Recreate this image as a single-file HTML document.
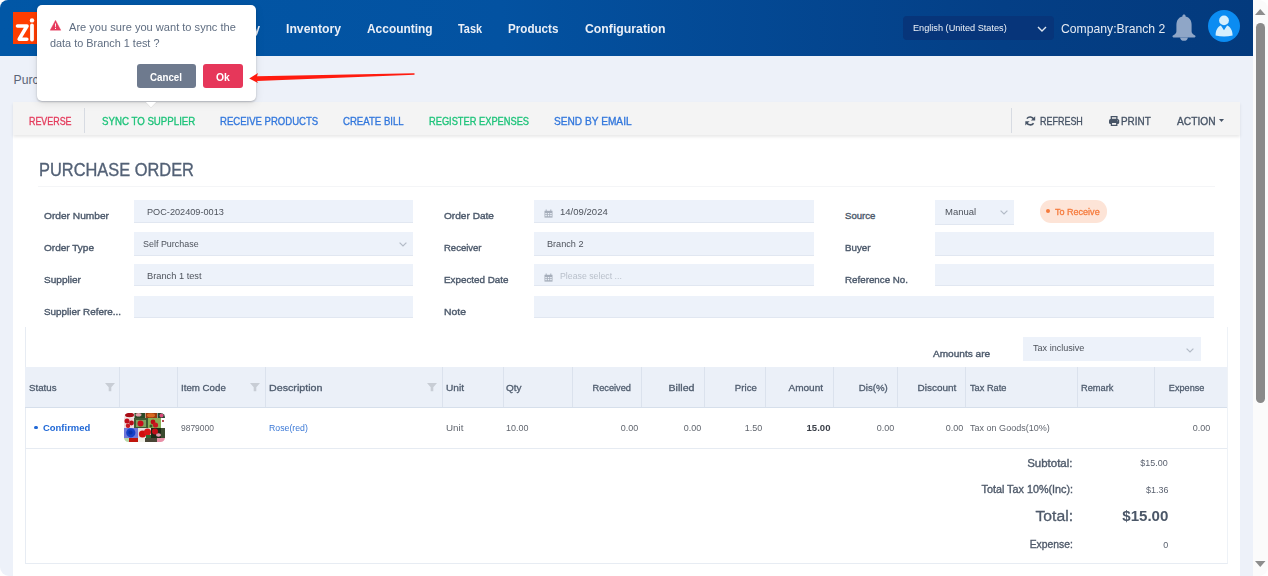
<!DOCTYPE html>
<html><head><meta charset="utf-8">
<style>
*{box-sizing:border-box;margin:0;padding:0}
html,body{width:1268px;height:576px;overflow:hidden;background:#fff;font-family:"Liberation Sans",sans-serif}
.a{position:absolute}
.t{position:absolute;white-space:nowrap;line-height:1}
svg{position:absolute;overflow:visible}
</style></head>
<body>
<div class="a" style="left:0;top:0;width:1253px;height:576px;background:#edf1f9;border-top-left-radius:8px;border-bottom-left-radius:9px"></div>
<div class="a" style="left:0;top:0;width:1253px;height:56px;background:linear-gradient(90deg,#0157a6 0%,#0352a1 40%,#043f86 80%,#033a7d 100%);border-top-left-radius:8px"></div>
<div class="a" style="left:13px;top:12px;width:87px;height:32px;background:#ff3d00"></div>
<svg style="left:13px;top:12px" width="87" height="32" viewBox="0 0 87 32"><path d="M4.5 14h9.5l-7.8 13.2h7.6" stroke="#fff" stroke-width="3.6" fill="none" stroke-linecap="round" stroke-linejoin="round"/><circle cx="19" cy="8.4" r="2.2" fill="#fff"/><path d="M19 13.5v14" stroke="#fff" stroke-width="3.8" stroke-linecap="round"/></svg>
<div class="t" style="left:221.00px;top:22.84px;font-size:12px;color:#eaeff7;font-weight:bold;transform:scaleX(0.975);transform-origin:left 0;">Supply</div>
<div class="t" style="left:285.60px;top:22.84px;font-size:12px;color:#eaeff7;font-weight:bold;transform:scaleX(1.018);transform-origin:left 0;">Inventory</div>
<div class="t" style="left:366.60px;top:22.84px;font-size:12px;color:#eaeff7;font-weight:bold;transform:scaleX(0.994);transform-origin:left 0;">Accounting</div>
<div class="t" style="left:458.20px;top:22.84px;font-size:12px;color:#eaeff7;font-weight:bold;transform:scaleX(0.911);transform-origin:left 0;">Task</div>
<div class="t" style="left:508.40px;top:22.84px;font-size:12px;color:#eaeff7;font-weight:bold;transform:scaleX(0.969);transform-origin:left 0;">Products</div>
<div class="t" style="left:584.60px;top:22.84px;font-size:12px;color:#eaeff7;font-weight:bold;transform:scaleX(1.022);transform-origin:left 0;">Configuration</div>
<div class="a" style="left:903px;top:16px;width:151px;height:24px;background:#07357a;border-radius:4px"></div>
<div class="t" style="left:912.70px;top:23.27px;font-size:9.6px;color:#eef2f8;transform:scaleX(0.955);transform-origin:left 0;">English (United States)</div>
<svg style="left:1037px;top:26px" width="10" height="6"><path d="M1 1 L5 5 L9 1" stroke="#dfe6f0" stroke-width="1.4" fill="none"/></svg>
<div class="t" style="left:1060.70px;top:22.70px;font-size:12.4px;color:#e6ebf3;transform:scaleX(0.983);transform-origin:left 0;">Company:Branch 2</div>
<svg style="left:1172px;top:14px" width="24" height="27" viewBox="0 0 24 27"><path d="M12 0.4c.9 0 1.6.7 1.6 1.5v.6C17.6 3.4 19.6 6.6 19.6 11v6.4c0 1.6 1.6 3.1 3.5 4.2.7.5.6 1.8-.5 1.8H1.4c-1.1 0-1.2-1.3-.5-1.8C2.8 20.500 4.400 19 4.400 17.4V11c0-4.4 2-7.6 6-8.5v-.6c0-.8.700-1.500 1.600-1.500z" fill="#8fa6c7"/><path d="M8.1 23.4h7.8c0 2-1.7 3.4-3.9 3.4s-3.9-1.400-3.900-3.400z" fill="#8fa6c7"/></svg>
<svg style="left:1208px;top:10px" width="32" height="32" viewBox="0 0 32 32"><circle cx="16" cy="16" r="16" fill="#0b8cf2"/><circle cx="16" cy="10.4" r="4.9" fill="#d6effd"/><path d="M7.6 25.6C7.6 20.3 9.8 16.800 12.900 15.600L16 20.2L19.1 15.6C22.2 16.8 24.6 20.3 24.6 25.6Q16 27.6 7.6 25.6Z" fill="#d6effd"/></svg>
<div class="t" style="left:13.50px;top:73.67px;font-size:12.2px;color:#5b6577;">Purchase Order</div>
<div class="a" style="left:13px;top:135px;width:1227px;height:441px;background:#fff"></div>
<div class="a" style="left:13px;top:102px;width:1227px;height:33px;background:#f4f4f4;box-shadow:0 2px 3px rgba(0,0,0,.09)"></div>
<div class="t" style="left:28.90px;top:116.90px;font-size:10.4px;color:#e43b5c;-webkit-text-stroke:0.33px #e43b5c;transform:scaleX(0.857);transform-origin:left 0;">REVERSE</div>
<div class="a" style="left:84px;top:108px;width:1px;height:24.5px;background:#d7dbe2"></div>
<div class="t" style="left:101.50px;top:116.90px;font-size:10.4px;color:#1ec37a;-webkit-text-stroke:0.33px #1ec37a;transform:scaleX(0.932);transform-origin:left 0;">SYNC TO SUPPLIER</div>
<div class="t" style="left:220.20px;top:116.90px;font-size:10.4px;color:#3277dc;-webkit-text-stroke:0.33px #3277dc;transform:scaleX(0.919);transform-origin:left 0;">RECEIVE PRODUCTS</div>
<div class="t" style="left:343.30px;top:116.90px;font-size:10.4px;color:#3277dc;-webkit-text-stroke:0.33px #3277dc;transform:scaleX(0.924);transform-origin:left 0;">CREATE BILL</div>
<div class="t" style="left:428.70px;top:116.90px;font-size:10.4px;color:#1ec37a;-webkit-text-stroke:0.33px #1ec37a;transform:scaleX(0.893);transform-origin:left 0;">REGISTER EXPENSES</div>
<div class="t" style="left:553.50px;top:116.90px;font-size:10.4px;color:#3277dc;-webkit-text-stroke:0.33px #3277dc;transform:scaleX(0.976);transform-origin:left 0;">SEND BY EMAIL</div>
<div class="a" style="left:1011px;top:108px;width:1px;height:24.5px;background:#d7dbe2"></div>
<svg style="left:1024.5px;top:115.8px" width="10.5" height="9.8" viewBox="0 0 10.5 9.8"><path d="M8.9 3.6A4 4 0 0 0 1.9 2.6" stroke="#475466" stroke-width="1.6" fill="none"/><path d="M10.2 0.2v4.3H5.9z" fill="#475466"/><path d="M1.6 6.2A4 4 0 0 0 8.6 7.2" stroke="#475466" stroke-width="1.6" fill="none"/><path d="M0.3 9.6V5.3h4.3z" fill="#475466"/></svg>
<div class="t" style="left:1040.20px;top:116.90px;font-size:10.4px;color:#475466;-webkit-text-stroke:0.33px #475466;transform:scaleX(0.863);transform-origin:left 0;">REFRESH</div>
<svg style="left:1109px;top:115.8px" width="10.2" height="10" viewBox="0 0 10.2 10"><path d="M2.3 0.7h5.6v2.6H2.3z" fill="none" stroke="#475466" stroke-width="1.3"/><rect x="0" y="3" width="10.2" height="5" rx="1.6" fill="#475466"/><path d="M2.4 6.4h5.4v2.9H2.4z" fill="#f4f4f4" stroke="#475466" stroke-width="1.3"/><circle cx="8.5" cy="4.8" r=".55" fill="#9aa6b6"/></svg>
<div class="t" style="left:1121.30px;top:116.90px;font-size:10.4px;color:#475466;-webkit-text-stroke:0.33px #475466;transform:scaleX(0.955);transform-origin:left 0;">PRINT</div>
<div class="t" style="left:1176.80px;top:116.90px;font-size:10.4px;color:#475466;-webkit-text-stroke:0.33px #475466;transform:scaleX(0.982);transform-origin:left 0;">ACTION</div>
<svg style="left:1219px;top:119px" width="5" height="3"><path d="M0 0h5L2.5 3z" fill="#475466"/></svg>
<div class="t" style="left:39.10px;top:161.22px;font-size:18.4px;color:#536176;-webkit-text-stroke:0.35px #536176;transform:scaleX(0.892);transform-origin:left 0;">PURCHASE ORDER</div>
<div class="a" style="left:38px;top:186px;width:1177px;height:1px;background:#f4f5f7"></div>
<div class="t" style="left:43.90px;top:211.17px;font-size:9.6px;color:#4d5a6c;-webkit-text-stroke:0.38px #4d5a6c;transform:scaleX(1.059);transform-origin:left 0;">Order Number</div>
<div class="t" style="left:43.90px;top:242.77px;font-size:9.6px;color:#4d5a6c;-webkit-text-stroke:0.38px #4d5a6c;transform:scaleX(1.045);transform-origin:left 0;">Order Type</div>
<div class="t" style="left:43.90px;top:274.57px;font-size:9.6px;color:#4d5a6c;-webkit-text-stroke:0.38px #4d5a6c;transform:scaleX(1.050);transform-origin:left 0;">Supplier</div>
<div class="t" style="left:43.90px;top:307.07px;font-size:9.6px;color:#4d5a6c;-webkit-text-stroke:0.38px #4d5a6c;transform:scaleX(1.031);transform-origin:left 0;">Supplier Refere...</div>
<div class="a" style="left:134px;top:200px;width:279px;height:23px;background:#edf2fa;border-bottom:1px solid #e1e7f1"></div>
<div class="a" style="left:134px;top:232px;width:279px;height:24px;background:#edf2fa;border-bottom:1px solid #e1e7f1"></div>
<div class="a" style="left:134px;top:264px;width:279px;height:22px;background:#edf2fa;border-bottom:1px solid #e1e7f1"></div>
<div class="a" style="left:134px;top:296px;width:279px;height:22px;background:#edf2fa;border-bottom:1px solid #e1e7f1"></div>
<div class="t" style="left:146.70px;top:207.14px;font-size:9.4px;color:#4e535c;transform:scaleX(0.976);transform-origin:left 0;">POC-202409-0013</div>
<div class="t" style="left:143.30px;top:239.24px;font-size:9.4px;color:#4e535c;transform:scaleX(0.953);transform-origin:left 0;">Self Purchase</div>
<svg style="left:398.5px;top:242px" width="8" height="5"><path d="M.6 .6L4 4L7.4 .6" stroke="#b3bbc7" stroke-width="1.2" fill="none"/></svg>
<div class="t" style="left:146.70px;top:270.54px;font-size:9.4px;color:#4e535c;transform:scaleX(0.988);transform-origin:left 0;">Branch 1 test</div>
<div class="t" style="left:444.00px;top:211.17px;font-size:9.6px;color:#4d5a6c;-webkit-text-stroke:0.38px #4d5a6c;transform:scaleX(1.053);transform-origin:left 0;">Order Date</div>
<div class="t" style="left:444.00px;top:242.77px;font-size:9.6px;color:#4d5a6c;-webkit-text-stroke:0.38px #4d5a6c;transform:scaleX(0.990);transform-origin:left 0;">Receiver</div>
<div class="t" style="left:444.00px;top:274.57px;font-size:9.6px;color:#4d5a6c;-webkit-text-stroke:0.38px #4d5a6c;transform:scaleX(1.024);transform-origin:left 0;">Expected Date</div>
<div class="t" style="left:444.00px;top:307.07px;font-size:9.6px;color:#4d5a6c;-webkit-text-stroke:0.38px #4d5a6c;transform:scaleX(1.085);transform-origin:left 0;">Note</div>
<div class="a" style="left:534px;top:200px;width:280px;height:23px;background:#edf2fa;border-bottom:1px solid #e1e7f1"></div>
<div class="a" style="left:534px;top:232px;width:280px;height:24px;background:#edf2fa;border-bottom:1px solid #e1e7f1"></div>
<div class="a" style="left:534px;top:264px;width:280px;height:22px;background:#edf2fa;border-bottom:1px solid #e1e7f1"></div>
<div class="a" style="left:534px;top:296px;width:680px;height:22px;background:#edf2fa;border-bottom:1px solid #e1e7f1"></div>
<svg style="left:544px;top:209px" width="9" height="9" viewBox="0 0 9 9"><path d="M0.5 1.8h8v6.8h-8z" fill="#a6aebb"/><path d="M2.2 0.5v2M6.8 0.5v2" stroke="#a6aebb" stroke-width="1"/><path d="M1.3 4h1.5v1.2H1.3zM3.8 4h1.5v1.2H3.8zM6.2 4h1.5v1.2H6.2zM1.3 6h1.5v1.2H1.3zM3.8 6h1.5v1.2H3.8zM6.2 6h1.5v1.2H6.2z" fill="#edf2fa"/></svg>
<div class="t" style="left:560.30px;top:207.14px;font-size:9.4px;color:#4e535c;transform:scaleX(1.018);transform-origin:left 0;">14/09/2024</div>
<div class="t" style="left:547.40px;top:239.24px;font-size:9.4px;color:#4e535c;transform:scaleX(0.973);transform-origin:left 0;">Branch 2</div>
<svg style="left:544px;top:273px" width="9" height="9" viewBox="0 0 9 9"><path d="M0.5 1.8h8v6.8h-8z" fill="#a6aebb"/><path d="M2.2 0.5v2M6.8 0.5v2" stroke="#a6aebb" stroke-width="1"/><path d="M1.3 4h1.5v1.2H1.3zM3.8 4h1.5v1.2H3.8zM6.2 4h1.5v1.2H6.2zM1.3 6h1.5v1.2H1.3zM3.8 6h1.5v1.2H3.8zM6.2 6h1.5v1.2H6.2z" fill="#edf2fa"/></svg>
<div class="t" style="left:560.30px;top:270.54px;font-size:9.4px;color:#b9c0cb;transform:scaleX(0.934);transform-origin:left 0;">Please select ...</div>
<div class="t" style="left:845.00px;top:210.57px;font-size:9.6px;color:#4d5a6c;-webkit-text-stroke:0.38px #4d5a6c;">Source</div>
<div class="t" style="left:845.00px;top:242.77px;font-size:9.6px;color:#4d5a6c;-webkit-text-stroke:0.38px #4d5a6c;transform:scaleX(1.017);transform-origin:left 0;">Buyer</div>
<div class="t" style="left:845.00px;top:274.57px;font-size:9.6px;color:#4d5a6c;-webkit-text-stroke:0.38px #4d5a6c;transform:scaleX(1.018);transform-origin:left 0;">Reference No.</div>
<div class="a" style="left:935px;top:200px;width:79px;height:25px;background:#edf2fa;border-bottom:1px solid #e1e7f1"></div>
<div class="t" style="left:944.80px;top:207.14px;font-size:9.4px;color:#4e535c;transform:scaleX(1.015);transform-origin:left 0;">Manual</div>
<svg style="left:999.5px;top:210px" width="8" height="5"><path d="M.6 .6L4 4L7.4 .6" stroke="#b3bbc7" stroke-width="1.2" fill="none"/></svg>
<div class="a" style="left:935px;top:232px;width:279px;height:24px;background:#edf2fa;border-bottom:1px solid #e1e7f1"></div>
<div class="a" style="left:935px;top:264px;width:279px;height:22px;background:#edf2fa;border-bottom:1px solid #e1e7f1"></div>
<div class="a" style="left:1039.5px;top:200px;width:67.0px;height:22.5px;background:#fde4d7;border-radius:11px"></div>
<div class="a" style="left:1046px;top:209.3px;width:4px;height:4px;border-radius:50%;background:#f57a3c"></div>
<div class="t" style="left:1055.30px;top:207.37px;font-size:9.6px;color:#f57a3c;-webkit-text-stroke:0.3px #f57a3c;transform:scaleX(0.941);transform-origin:left 0;">To Receive</div>
<div class="a" style="left:25px;top:327px;width:1203px;height:237px;border:1px solid #e7ecf3;border-right-color:#eef2f7;border-top:none"></div>
<div class="t" style="left:932.80px;top:348.67px;font-size:9.6px;color:#4d5a6c;-webkit-text-stroke:0.38px #4d5a6c;transform:scaleX(1.051);transform-origin:left 0;">Amounts are</div>
<div class="a" style="left:1023px;top:337px;width:178px;height:24px;background:#edf2fa"></div>
<div class="t" style="left:1033.00px;top:344.21px;font-size:9.2px;color:#4e535c;transform:scaleX(0.987);transform-origin:left 0;">Tax inclusive</div>
<svg style="left:1186px;top:347.5px" width="8" height="5"><path d="M.6 .6L4 4L7.4 .6" stroke="#b3bbc7" stroke-width="1.2" fill="none"/></svg>
<div class="a" style="left:25px;top:367px;width:1202px;height:41px;background:#ebf0f8;border-bottom:1px solid #d6dfeb"></div>
<div class="a" style="left:119px;top:367px;width:1px;height:40px;background:#dbe2ed"></div>
<div class="a" style="left:177px;top:367px;width:1px;height:40px;background:#dbe2ed"></div>
<div class="a" style="left:265px;top:367px;width:1px;height:40px;background:#dbe2ed"></div>
<div class="a" style="left:442px;top:367px;width:1px;height:40px;background:#dbe2ed"></div>
<div class="a" style="left:502.5px;top:367px;width:1.0px;height:40px;background:#dbe2ed"></div>
<div class="a" style="left:572px;top:367px;width:1px;height:40px;background:#dbe2ed"></div>
<div class="a" style="left:640.5px;top:367px;width:1.0px;height:40px;background:#dbe2ed"></div>
<div class="a" style="left:704px;top:367px;width:1px;height:40px;background:#dbe2ed"></div>
<div class="a" style="left:765px;top:367px;width:1px;height:40px;background:#dbe2ed"></div>
<div class="a" style="left:832.5px;top:367px;width:1.0px;height:40px;background:#dbe2ed"></div>
<div class="a" style="left:897px;top:367px;width:1px;height:40px;background:#dbe2ed"></div>
<div class="a" style="left:965px;top:367px;width:1px;height:40px;background:#dbe2ed"></div>
<div class="a" style="left:1077px;top:367px;width:1px;height:40px;background:#dbe2ed"></div>
<div class="a" style="left:1153.5px;top:367px;width:1.0px;height:40px;background:#dbe2ed"></div>
<div class="t" style="left:29.40px;top:382.57px;font-size:9.6px;color:#4f5c6e;-webkit-text-stroke:0.3px #4f5c6e;transform:scaleX(1.010);transform-origin:left 0;">Status</div>
<svg style="left:104.8px;top:383px" width="10" height="8"><path d="M0 0h10L6.3 4.3V8.2H3.7V4.3z" fill="#c8cdd5"/></svg>
<div class="t" style="left:180.60px;top:382.57px;font-size:9.6px;color:#4f5c6e;-webkit-text-stroke:0.3px #4f5c6e;transform:scaleX(1.012);transform-origin:left 0;">Item Code</div>
<svg style="left:250px;top:383px" width="10" height="8"><path d="M0 0h10L6.3 4.3V8.2H3.7V4.3z" fill="#c8cdd5"/></svg>
<div class="t" style="left:269.00px;top:382.57px;font-size:9.6px;color:#4f5c6e;-webkit-text-stroke:0.3px #4f5c6e;transform:scaleX(1.114);transform-origin:left 0;">Description</div>
<svg style="left:427.3px;top:383px" width="10" height="8"><path d="M0 0h10L6.3 4.3V8.2H3.7V4.3z" fill="#c8cdd5"/></svg>
<div class="t" style="left:446.40px;top:382.57px;font-size:9.6px;color:#4f5c6e;-webkit-text-stroke:0.3px #4f5c6e;transform:scaleX(1.054);transform-origin:left 0;">Unit</div>
<div class="t" style="left:506.40px;top:382.57px;font-size:9.6px;color:#4f5c6e;-webkit-text-stroke:0.3px #4f5c6e;transform:scaleX(1.038);transform-origin:left 0;">Qty</div>
<div class="t" style="right:636.70px;top:382.57px;font-size:9.6px;color:#4f5c6e;-webkit-text-stroke:0.3px #4f5c6e;transform:scaleX(0.962);transform-origin:right 0;">Received</div>
<div class="t" style="right:573.20px;top:382.57px;font-size:9.6px;color:#4f5c6e;-webkit-text-stroke:0.3px #4f5c6e;transform:scaleX(1.107);transform-origin:right 0;">Billed</div>
<div class="t" style="right:511.40px;top:382.57px;font-size:9.6px;color:#4f5c6e;-webkit-text-stroke:0.3px #4f5c6e;transform:scaleX(1.006);transform-origin:right 0;">Price</div>
<div class="t" style="right:444.60px;top:382.57px;font-size:9.6px;color:#4f5c6e;-webkit-text-stroke:0.3px #4f5c6e;transform:scaleX(1.046);transform-origin:right 0;">Amount</div>
<div class="t" style="right:380.00px;top:382.57px;font-size:9.6px;color:#4f5c6e;-webkit-text-stroke:0.3px #4f5c6e;transform:scaleX(1.007);transform-origin:right 0;">Dis(%)</div>
<div class="t" style="right:311.50px;top:382.57px;font-size:9.6px;color:#4f5c6e;-webkit-text-stroke:0.3px #4f5c6e;transform:scaleX(1.039);transform-origin:right 0;">Discount</div>
<div class="t" style="right:64.00px;top:382.57px;font-size:9.6px;color:#4f5c6e;-webkit-text-stroke:0.3px #4f5c6e;transform:scaleX(0.950);transform-origin:right 0;">Expense</div>
<div class="t" style="left:970.00px;top:382.57px;font-size:9.6px;color:#4f5c6e;-webkit-text-stroke:0.3px #4f5c6e;transform:scaleX(0.963);transform-origin:left 0;">Tax Rate</div>
<div class="t" style="left:1081.30px;top:382.57px;font-size:9.6px;color:#4f5c6e;-webkit-text-stroke:0.3px #4f5c6e;transform:scaleX(0.967);transform-origin:left 0;">Remark</div>
<div class="a" style="left:25px;top:448px;width:1202px;height:1px;background:#e6ebf2"></div>
<div class="a" style="left:34px;top:425.5px;width:3.5px;height:3.5px;border-radius:50%;background:#2068d6"></div>
<div class="t" style="left:42.80px;top:423.34px;font-size:9.4px;color:#2068d6;font-weight:bold;transform:scaleX(1.008);transform-origin:left 0;">Confirmed</div>
<svg style="left:123.5px;top:413px" width="41" height="29" viewBox="0 0 41 29"><defs><clipPath id="cp"><rect width="41" height="29" rx="4.5"/></clipPath><filter id="bl"><feGaussianBlur stdDeviation="0.45"/></filter></defs><g clip-path="url(#cp)" filter="url(#bl)">
<rect width="41" height="29" fill="#f4f0f0"/>
<rect x="0" y="0" width="10" height="5" fill="#f2e8e8"/><ellipse cx="5.5" cy="2" rx="4.5" ry="2.2" fill="#a80c14"/>
<rect x="10.5" y="0" width="10.5" height="5" fill="#2c4a26"/><ellipse cx="14.5" cy="1.8" rx="3" ry="1.8" fill="#e0a0aa"/>
<rect x="21.5" y="0" width="11.5" height="5" fill="#9a3a10"/><ellipse cx="27" cy="2.3" rx="4" ry="2" fill="#d86a22"/>
<rect x="33.5" y="0" width="7.5" height="5" fill="#284a30"/><circle cx="37.5" cy="2.5" r="2" fill="#d84a7a"/>
<rect x="0" y="5" width="10" height="10" fill="#eedada"/><circle cx="3" cy="8" r="2.5" fill="#c0101c"/><circle cx="7.5" cy="10" r="2.4" fill="#b80c18"/><circle cx="4" cy="12.8" r="2.2" fill="#c81420"/>
<rect x="10" y="5" width="14" height="10" fill="#3e5a30"/><rect x="12" y="7" width="10" height="7" fill="#7ea060"/><circle cx="16.5" cy="10.5" r="3" fill="#c8101a"/>
<rect x="24" y="5" width="13" height="10" fill="#88b058"/><circle cx="29" cy="9" r="2.4" fill="#b81018"/><circle cx="31.5" cy="12" r="2.6" fill="#c81820"/><circle cx="27" cy="13" r="1.5" fill="#3a5a2a"/>
<rect x="37" y="5" width="4" height="10" fill="#fff"/><circle cx="39" cy="8" r="1" fill="#a01018"/>
<rect x="0" y="15" width="14" height="10" fill="#7078d8"/><circle cx="6.8" cy="19.8" r="4.6" fill="#1240c8"/><circle cx="6.5" cy="19.5" r="2" fill="#0830a8"/>
<rect x="14" y="15" width="13" height="10" fill="#e6dede"/><circle cx="18.5" cy="21" r="3.6" fill="#d01010"/><circle cx="23.5" cy="19" r="3.5" fill="#d81818"/><rect x="22" y="22" width="5" height="3" fill="#2e6a30"/>
<rect x="27" y="15" width="14" height="10" fill="#1e2a18"/><circle cx="31" cy="18.5" r="3" fill="#c01018"/><ellipse cx="34.5" cy="22" rx="2.5" ry="1.8" fill="#e0a0b0"/><rect x="37" y="15" width="4" height="10" fill="#3a4a2e"/>
<rect x="0" y="25" width="5" height="4" fill="#b8d8a8"/><rect x="5" y="25" width="9" height="4" fill="#c01810"/><rect x="14" y="25" width="7" height="4" fill="#f0f0e8"/><rect x="21" y="25" width="12" height="4" fill="#4a4436"/><rect x="33" y="25" width="8" height="4" fill="#e890a8"/>
</g></svg>
<div class="t" style="left:180.60px;top:423.34px;font-size:9.4px;color:#61666f;transform:scaleX(0.902);transform-origin:left 0;">9879000</div>
<div class="t" style="left:269.00px;top:423.34px;font-size:9.4px;color:#3a78d6;transform:scaleX(0.933);transform-origin:left 0;">Rose(red)</div>
<div class="t" style="left:446.40px;top:423.34px;font-size:9.4px;color:#61666f;transform:scaleX(1.047);transform-origin:left 0;">Unit</div>
<div class="t" style="left:506.40px;top:423.34px;font-size:9.4px;color:#61666f;transform:scaleX(0.956);transform-origin:left 0;">10.00</div>
<div class="t" style="right:629.80px;top:423.34px;font-size:9.4px;color:#61666f;transform:scaleX(0.957);transform-origin:right 0;">0.00</div>
<div class="t" style="right:567.00px;top:423.34px;font-size:9.4px;color:#61666f;transform:scaleX(0.957);transform-origin:right 0;">0.00</div>
<div class="t" style="right:505.30px;top:423.34px;font-size:9.4px;color:#61666f;transform:scaleX(0.957);transform-origin:right 0;">1.50</div>
<div class="t" style="right:438.00px;top:423.34px;font-size:9.4px;color:#3a3f48;font-weight:bold;transform:scaleX(1.020);transform-origin:right 0;">15.00</div>
<div class="t" style="right:373.70px;top:423.34px;font-size:9.4px;color:#61666f;transform:scaleX(0.957);transform-origin:right 0;">0.00</div>
<div class="t" style="right:304.90px;top:423.34px;font-size:9.4px;color:#61666f;transform:scaleX(0.957);transform-origin:right 0;">0.00</div>
<div class="t" style="right:57.80px;top:423.34px;font-size:9.4px;color:#61666f;transform:scaleX(0.957);transform-origin:right 0;">0.00</div>
<div class="t" style="left:970.00px;top:423.34px;font-size:9.4px;color:#61666f;transform:scaleX(0.963);transform-origin:left 0;">Tax on Goods(10%)</div>
<div class="t" style="right:195.40px;top:457.51px;font-size:10.5px;color:#4f5a6a;-webkit-text-stroke:0.35px #4f5a6a;transform:scaleX(1.093);transform-origin:right 0;">Subtotal:</div>
<div class="t" style="right:195.40px;top:484.01px;font-size:10.5px;color:#4f5a6a;-webkit-text-stroke:0.35px #4f5a6a;transform:scaleX(1.028);transform-origin:right 0;">Total Tax 10%(Inc):</div>
<div class="t" style="right:195.40px;top:508.08px;font-size:15.5px;color:#4f5a6a;-webkit-text-stroke:0.3px #4f5a6a;transform:scaleX(1.015);transform-origin:right 0;">Total:</div>
<div class="t" style="right:195.40px;top:538.81px;font-size:10.5px;color:#4f5a6a;-webkit-text-stroke:0.35px #4f5a6a;transform:scaleX(0.984);transform-origin:right 0;">Expense:</div>
<div class="t" style="right:100.00px;top:458.44px;font-size:9.4px;color:#5b6270;transform:scaleX(0.953);transform-origin:right 0;">$15.00</div>
<div class="t" style="right:100.00px;top:484.94px;font-size:9.4px;color:#5b6270;transform:scaleX(0.956);transform-origin:right 0;">$1.36</div>
<div class="t" style="right:100.00px;top:508.08px;font-size:15.5px;color:#4b5768;font-weight:bold;transform:scaleX(0.974);transform-origin:right 0;">$15.00</div>
<div class="t" style="right:100.00px;top:539.74px;font-size:9.4px;color:#5b6270;transform:scaleX(0.956);transform-origin:right 0;">0</div>
<div class="a" style="left:37px;top:5px;width:219px;height:96px;background:#fff;border-radius:5px;box-shadow:0 1px 2px rgba(0,0,0,.22),0 2px 8px rgba(0,0,0,.10)"></div>
<svg style="left:145px;top:102px" width="12" height="8"><path d="M0.6 0H11.4L6 5.8Z" fill="#fff"/><path d="M0.6 0L6 5.8L11.4 0" fill="none" stroke="rgba(0,0,0,.08)" stroke-width=".9"/></svg>
<svg style="left:50px;top:20.2px" width="11" height="10.5" viewBox="0 0 11 10.5"><path d="M5.5 0.3 L10.8 10.2 H0.2Z" fill="#e6395c" stroke="#e6395c" stroke-width=".4" stroke-linejoin="round"/><path d="M5 3.6h1l-.15 3.6h-.7z M5 8.1h1v1h-1z" fill="#fff"/></svg>
<div class="t" style="left:69.40px;top:21.69px;font-size:11px;color:#5f6d81;transform:scaleX(1.007);transform-origin:left 0;">Are you sure you want to sync the</div>
<div class="t" style="left:50.20px;top:37.99px;font-size:11px;color:#5f6d81;transform:scaleX(0.989);transform-origin:left 0;">data to Branch 1 test ?</div>
<div class="a" style="left:137px;top:64px;width:59px;height:24px;background:#6e7a8e;border-radius:3px"></div>
<div class="t" style="left:150.40px;top:72.53px;font-size:10px;color:#fff;font-weight:bold;transform:scaleX(0.976);transform-origin:left 0;">Cancel</div>
<div class="a" style="left:203px;top:64px;width:40px;height:24px;background:#e6375a;border-radius:3px"></div>
<div class="t" style="left:216.10px;top:72.53px;font-size:10px;color:#fff;font-weight:bold;transform:scaleX(1.034);transform-origin:left 0;">Ok</div>
<svg style="left:0;top:0" width="1268" height="576"><path d="M249.2 78.5 L258 73 L257 76.2 L414.5 73.2 L414.5 74.8 L257 81 L258 83 Z" fill="#ff1b0f"/></svg>
<div class="a" style="left:1253px;top:0;width:15px;height:576px;background:#fbfbfb;border-top-right-radius:9px;border-bottom-right-radius:9px"></div>
<svg style="left:1255px;top:9px" width="10.5" height="6"><path d="M5.25 0L10.5 6H0z" fill="#8d8d8d"/></svg>
<div class="a" style="left:1256px;top:22.5px;width:9px;height:380px;border-radius:4.5px;background:#8a8a8a"></div>
<svg style="left:1255px;top:561px" width="10.5" height="6"><path d="M0 0h10.5L5.25 6z" fill="#8d8d8d"/></svg>
</body></html>
